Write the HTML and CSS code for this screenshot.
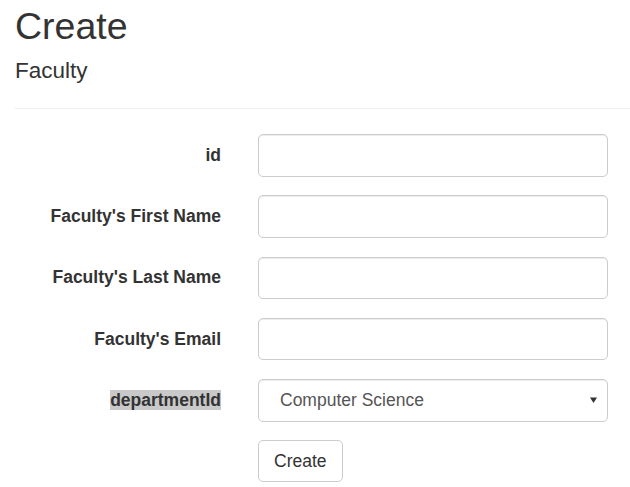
FILE: index.html
```html
<!DOCTYPE html>
<html>
<head>
<meta charset="utf-8">
<title>Create</title>
<link rel="stylesheet" href="styles.css">
</head>
<body>
<div class="container">
  <h1 class="title">Create</h1>
  <h4 class="subtitle">Faculty</h4>
  <hr class="divider">
  <form class="form">
    <div class="row">
      <label class="label">id</label>
      <input class="control" type="text">
    </div>
    <div class="row">
      <label class="label">Faculty's First Name</label>
      <input class="control" type="text">
    </div>
    <div class="row">
      <label class="label">Faculty's Last Name</label>
      <input class="control" type="text">
    </div>
    <div class="row">
      <label class="label">Faculty's Email</label>
      <input class="control" type="text">
    </div>
    <div class="row">
      <label class="label"><span class="selected">departmentId</span></label>
      <div class="select-wrap">
        <select class="control select">
          <option>Computer Science</option>
        </select>
        <svg class="caret" width="7" height="6" viewBox="0 0 7 6"><path d="M0 0.5 H7 L3.5 6 Z" fill="#333"/></svg>
      </div>
    </div>
    <div class="row">
      <div class="label"></div>
      <button class="btn" type="button">Create</button>
    </div>
  </form>
</div>
</body>
</html>
```

FILE: styles.css
```css
html, body {
  margin: 0;
  padding: 0;
  background: #fff;
}
body {
  font-family: "Liberation Sans", Arial, sans-serif;
  color: #333;
  font-size: 17.5px;
  line-height: 1.42857;
}
.container {
  padding: 0 0 0 15px;
}
.title {
  font-size: 37.5px;
  font-weight: 400;
  line-height: 1.1;
  margin: 6px 0 0;
}
.subtitle {
  font-size: 22.5px;
  font-weight: 400;
  line-height: 1.1;
  margin: 11.5px 0 0;
}
.divider {
  border: 0;
  border-top: 1px solid #eee;
  margin: 24.5px 0 25px;
  height: 0;
}
.form {
  display: flex;
  flex-direction: column;
  gap: 18.75px;
}
.row {
  display: flex;
  align-items: flex-start;
  gap: 37px;
}
.label {
  width: 206px;
  flex: none;
  text-align: right;
  font-weight: 700;
  padding-top: 8.75px;
  line-height: 25px;
}
.selected {
  background: #c9c9c9;
}
.control {
  box-sizing: border-box;
  width: 350px;
  height: 42.5px;
  border: 1px solid #ccc;
  border-radius: 5px;
  box-shadow: inset 0 1px 1px rgba(0,0,0,.075);
  background: #fff;
  font-family: inherit;
  font-size: 17.5px;
  color: #555;
  padding: 7.5px 15px;
  margin: 0;
}
.select-wrap {
  position: relative;
  width: 350px;
}
.select {
  appearance: none;
  -webkit-appearance: none;
  padding-left: 21px;
  display: block;
}
.caret {
  position: absolute;
  left: 332px;
  top: 18px;
  pointer-events: none;
}
.btn {
  box-sizing: border-box;
  height: 42px;
  padding: 7.5px 15px;
  border: 1px solid #ccc;
  border-radius: 5px;
  background: #fff;
  color: #333;
  font-family: inherit;
  font-size: 17.5px;
  line-height: 25px;
  margin: 0;
}
```
